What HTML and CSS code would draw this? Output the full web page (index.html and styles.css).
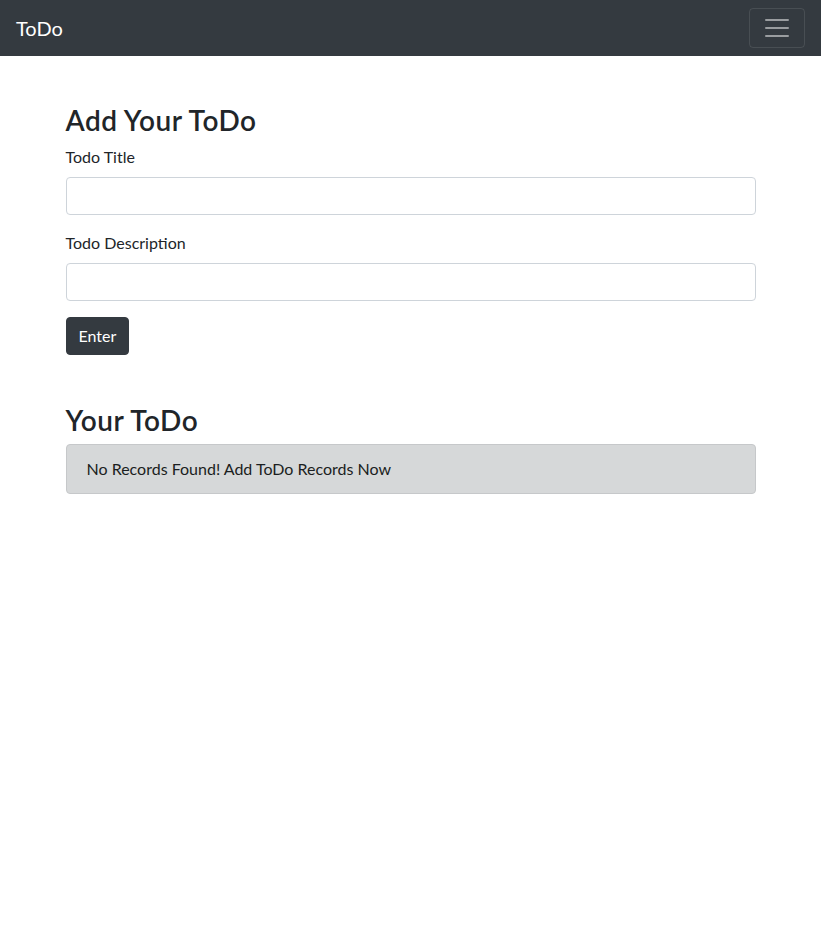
FILE: index.html
```html
<!DOCTYPE html>
<html lang="en">
<head>
<meta charset="utf-8">
<title>ToDo</title>
<link rel="stylesheet" href="styles.css">
</head>
<body>
<nav class="navbar">
  <a class="brand" href="#">ToDo</a>
  <button class="toggler" type="button" aria-label="Toggle navigation">
    <svg class="toggler-icon" viewBox="0 0 30 30" width="30" height="30"><path d="M4 7h22M4 15h22M4 23h22" stroke="rgba(255,255,255,0.5)" stroke-width="2" stroke-linecap="round" stroke-miterlimit="10"/></svg>
  </button>
</nav>
<main class="container form-section">
  <h3 class="heading">Add Your ToDo</h3>
  <form class="todo-form">
    <div class="form-group">
      <label class="label" for="title">Todo Title</label>
      <input class="input" id="title" type="text">
    </div>
    <div class="form-group">
      <label class="label" for="desc">Todo Description</label>
      <input class="input" id="desc" type="text">
    </div>
    <button class="btn" type="button">Enter</button>
  </form>
</main>
<section class="container list-section">
  <h3 class="heading">Your ToDo</h3>
  <div class="alert">No Records Found! Add ToDo Records Now</div>
</section>
</body>
</html>
```
FILE: styles.css
```css
* { box-sizing: border-box; }
body {
  margin: 0;
  font-family: Lato, "Noto Sans", sans-serif;
  font-size: 16px;
  line-height: 1.5;
  color: #212529;
  background: #fff;
}
.navbar {
  background: #343a40;
  height: 56px;
  padding: 8px 16px;
  display: flex;
  align-items: center;
  justify-content: space-between;
}
.brand {
  color: #fff;
  font-size: 20px;
  line-height: 30px;
  text-decoration: none;
}
.toggler {
  width: 56px;
  height: 40px;
  padding: 4px 12px;
  background: transparent;
  border: 1px solid rgba(255,255,255,0.1);
  border-radius: 4px;
  display: flex;
  align-items: center;
  justify-content: center;
}
.toggler-icon { display: block; }
.container {
  width: 720px;
  margin: 0 auto;
  padding: 0 15px;
}
.form-section { margin-top: 47px; }
.list-section { margin-top: 48px; }
.heading {
  margin: 0 0 8px;
  padding-top: 1px;
  height: 33.6px;
  font-size: 28px;
  font-weight: 600;
  line-height: 1.2;
  letter-spacing: 0.5px;
}
.todo-form { margin: 0; }
.form-group { margin-bottom: 16px; }
.label {
  display: inline-block;
  margin-bottom: 8px;
}
.input {
  display: block;
  width: 100%;
  height: 38px;
  padding: 6px 12px;
  font: inherit;
  border: 1px solid #ced4da;
  border-radius: 4px;
  background: #fff;
}
.btn {
  display: inline-block;
  font: inherit;
  color: #fff;
  background: #343a40;
  border: 1px solid #343a40;
  border-radius: 4px;
  padding: 6px 12px;
  line-height: 1.5;
}
.alert {
  padding: 12px 20px;
  background: #d6d8d9;
  border: 1px solid #c6c8ca;
  border-radius: 4px;
  color: #1b1e21;
}
```
